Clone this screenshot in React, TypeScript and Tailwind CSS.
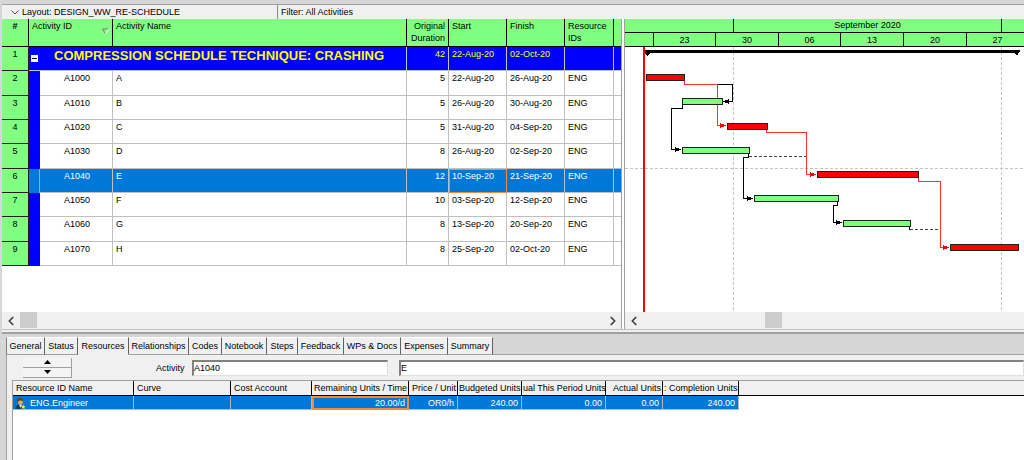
import { ChevronLeft, ChevronRight } from 'lucide-react';
import clsx from 'clsx';

interface Activity {
  id: string;
  name: string;
  duration: number;
  start: string;
  finish: string;
}

const activities: Activity[] = [
  { id: 'A1000', name: 'A', duration: 5, start: '22-Aug-20', finish: '26-Aug-20' },
  { id: 'A1010', name: 'B', duration: 5, start: '26-Aug-20', finish: '30-Aug-20' },
  { id: 'A1020', name: 'C', duration: 5, start: '31-Aug-20', finish: '04-Sep-20' },
  { id: 'A1030', name: 'D', duration: 8, start: '26-Aug-20', finish: '02-Sep-20' },
  { id: 'A1040', name: 'E', duration: 12, start: '10-Sep-20', finish: '21-Sep-20' },
  { id: 'A1050', name: 'F', duration: 10, start: '03-Sep-20', finish: '12-Sep-20' },
  { id: 'A1060', name: 'G', duration: 8, start: '13-Sep-20', finish: '20-Sep-20' },
  { id: 'A1070', name: 'H', duration: 8, start: '25-Sep-20', finish: '02-Oct-20' },
];

const selectedId = 'A1040';

const tabs = [
  { label: 'General', width: 'w-[39px]' },
  { label: 'Status', width: 'w-[33px]' },
  { label: 'Resources', width: 'w-[51px]' },
  { label: 'Relationships', width: 'w-[60px]' },
  { label: 'Codes', width: 'w-[33px]' },
  { label: 'Notebook', width: 'w-[45px]' },
  { label: 'Steps', width: 'w-[31px]' },
  { label: 'Feedback', width: 'w-[46px]' },
  { label: 'WPs & Docs', width: 'w-[57px]' },
  { label: 'Expenses', width: 'w-[47px]' },
  { label: 'Summary', width: 'w-[45px]' },
];

// x, y, width, critical
const bars: [number, number, number, boolean][] = [
  [21, 27, 38, true],
  [57, 51, 40, false],
  [102, 76, 40, true],
  [57, 100, 67, false],
  [192, 124, 101, true],
  [129, 148, 84, false],
  [218, 173, 67, false],
  [325, 197, 68, true],
];

const LayoutBar = () => (
  <div className="flex h-[14px] items-center bg-[#f0f0f0] leading-3">
    <button className="flex h-full w-[276px] items-center border-r border-[#8c8c8c] pl-[9px]">
      <svg width="8" height="5" className="mr-[3px]" fill="none" stroke="#555">
        <path d="M.5 .5 4 4 7.5 .5" />
      </svg>
      Layout: DESIGN_WW_RE-SCHEDULE
    </button>
    <span className="pl-[3px]">Filter: All Activities</span>
  </div>
);

const ActivityTable = () => {
  const head = 'border-r border-b border-black bg-[#80ff80] px-[3px] pt-[1px]';
  const cell = 'border-r border-b border-[#c0c0c0] px-[3px] pt-[1px]';
  const focused = 'border border-[#f08a3c] px-[2px]';
  const num = 'border-r border-b border-[#202020] bg-[#80ff80] pt-[1px] text-center';

  return (
    <table className="h-[247px] w-full table-fixed border-separate border-spacing-0 text-left align-top">
      <colgroup>
        <col className="w-[27px]" />
        <col className="w-[11px]" />
        <col className="w-[73px]" />
        <col />
        <col className="w-[42px]" />
        <col className="w-[58px]" />
        <col className="w-[58px]" />
        <col className="w-[49px]" />
        <col className="w-[7px]" />
      </colgroup>
      <thead>
        <tr className="h-[28px] align-top [&>th]:font-normal">
          <th className={clsx(head, 'text-center')}>
            <b>#</b>
          </th>
          <th colSpan={2} className={head}>
            <div className="flex justify-between">
              Activity ID
              <svg width="7" height="7" className="mt-[8px]" fill="none">
                <path d="M.5 1h6" stroke="#777" />
                <path d="M.5 1 3.500 6" stroke="#777" />
                <path d="M6.500 1 3.500 6" stroke="#fff" />
              </svg>
            </div>
          </th>
          <th className={head}>Activity Name</th>
          <th className={clsx(head, 'text-right')}>
            Original
            <br />
            Duration
          </th>
          <th className={head}>Start</th>
          <th className={head}>Finish</th>
          <th className={head}>
            Resource
            <br />
            IDs
          </th>
          <th className="border-b border-black bg-[#80ff80]" />
        </tr>
      </thead>
      <tbody className="align-top">
        <tr className="h-[24px] bg-[#0000ff] text-[#ffff00]">
          <td className={clsx(num, 'text-black')}>1</td>
          <td colSpan={3} className="border-r border-b border-[#c0c0c0] pl-[2px]">
            <div className="flex">
              <button
                aria-label="Collapse"
                className="mt-[8px] flex size-[7px] shrink-0 items-center justify-center bg-white"
              >
                <span className="h-px w-[5px] bg-black" />
              </button>
              <span className="pl-[16px] text-[13px] leading-[17px] font-bold whitespace-nowrap">
                COMPRESSION SCHEDULE TECHNIQUE: CRASHING
              </span>
            </div>
          </td>
          <td className={clsx(cell, 'text-right')}>42</td>
          <td className={cell}>22-Aug-20</td>
          <td className={cell}>02-Oct-20</td>
          <td className={cell} />
          <td className="border-b border-[#c0c0c0]" />
        </tr>
        {activities.map((activity, i) => {
          const selected = activity.id === selectedId;
          return (
            <tr key={activity.id} className={clsx('h-[24px]', selected ? 'bg-[#0078d7] text-white' : 'bg-white')}>
              <td className={clsx(num, 'text-black')}>{i + 2}</td>
              <td className={selected ? 'border-r border-[#80b0d8]' : 'bg-[#0000ff]'} />
              <td className="border-r border-b border-[#c0c0c0] pt-[1px] pl-[24px]">{activity.id}</td>
              <td className={cell}>{activity.name}</td>
              <td className={clsx(cell, 'text-right')}>{activity.duration}</td>
              <td className={selected ? focused : cell}>{activity.start}</td>
              <td className={cell}>{activity.finish}</td>
              <td className={cell}>ENG</td>
              <td className="border-b border-[#c0c0c0]" />
            </tr>
          );
        })}
      </tbody>
    </table>
  );
};

const Timescale = () => (
  <div className="border-b border-black bg-[#80ff80] text-center">
    <div className="flex h-[14px] border-b border-black leading-3">
      <div className="w-[109px] shrink-0 border-r border-black" />
      <div className="w-[268px] shrink-0 border-r border-black">September 2020</div>
    </div>
    <div className="flex h-[13px] overflow-hidden leading-[14px]">
      <div className="w-[29px] shrink-0 border-r border-black" />
      <div className="w-[62px] shrink-0 border-r border-black">23</div>
      <div className="w-[63px] shrink-0 border-r border-black">30</div>
      <div className="w-[62px] shrink-0 border-r border-black">06</div>
      <div className="w-[63px] shrink-0 border-r border-black">13</div>
      <div className="w-[63px] shrink-0 border-r border-black">20</div>
      <div className="w-[62px] shrink-0 border-r border-black">27</div>
    </div>
  </div>
);

const GanttChart = () => (
  <svg className="h-[265px] w-full" fill="none" shapeRendering="crispEdges">
    <g stroke="#c4c4c4" strokeDasharray="3 2">
      <path d="M108.500 0V265M376.500 0V265" />
      <path d="M0 121.500H1600" />
    </g>
    <path d="M19 0V265" stroke="#f00" strokeWidth="2" />
    <path d="M20 3H395V4L392 9L389 6H26L22 9L20 6Z" fill="#000" />
    {/* driving links */}
    <g stroke="#000">
      <path d="M92 37.500H107.500V54.500H99" />
      <path d="M57.500 58V61.500H46.500V102.500H55" />
      <path d="M123.500 107V110.500H118.500V151.500H127" />
      <path d="M212.500 155V158.500H208.500V175.500H216" />
      <path d="M284.500 180V183" />
    </g>
    <g stroke="#444" strokeDasharray="3 2">
      <path d="M124 109.500H181" />
      <path d="M285 182.500H315" />
    </g>
    <g stroke="#ff3030">
      <path d="M59.500 34V37.500H92.500V78.500H100" />
      <path d="M141.500 83V85.500H181.500V127.500H190" />
      <path d="M293.500 131V134.500H315.500V200.500H323" />
    </g>
    <g fill="#000">
      <path d="M98 54.500L104 52V57Z" />
      <path d="M56 102.500L50 100V105Z" />
      <path d="M128 151.500L122 149V154Z" />
      <path d="M217 175.500L211 173V178Z" />
    </g>
    <g fill="#f00">
      <path d="M101 78.500L95 76V81Z" />
      <path d="M191 127.500L185 125V130Z" />
      <path d="M324 200.500L318 198V203Z" />
    </g>
    {bars.map(([x, y, width, critical]) => (
      <rect
        key={y}
        x={x + 0.5}
        y={y + 0.5}
        width={width}
        height={6}
        fill={critical ? '#ff0000' : '#80ff80'}
        stroke="#202020"
      />
    ))}
  </svg>
);

const ScrollBar = ({ thumb, end }: { thumb: string; end?: boolean }) => (
  <div className="flex h-[17px] items-center bg-[#f0f0f0] text-[#404040]">
    <button aria-label="Scroll left" className="flex w-[17px] justify-center">
      <ChevronLeft size={14} strokeWidth={3} />
    </button>
    <div className="flex h-full flex-1">
      <div className={clsx('h-[16px] w-[17px] bg-[#cdcdcd]', thumb)} />
    </div>
    {end && (
      <button aria-label="Scroll right" className="flex w-[17px] justify-center">
        <ChevronRight size={14} strokeWidth={3} />
      </button>
    )}
  </div>
);

const PersonIcon = () => (
  <svg width="12" height="12" viewBox="0 0 12 13" className="shrink-0">
    <path d="M1 13C1 9 3.500 8 6 8s4 1 4.500 5Z" fill="#123f66" />
    <path d="M5 8h3l-1 4Z" fill="#fff" />
    <ellipse cx="6.500" cy="5" rx="2.800" ry="3.500" fill="#d7a66a" />
    <path d="M3 6C2 2 4 1 6.500 1S10 3 9 5C8 4 7 3.500 5 4Z" fill="#5b4422" />
    <path d="m9.500 8 .8 1.700 1.700.3-1.300 1.200.3 1.800-1.500-.9-1.500.9.3-1.800L7 10l1.700-.3Z" fill="#f5ee1c" />
  </svg>
);

const ResourceTable = () => {
  const head = 'border-r border-b border-black font-normal whitespace-nowrap';
  const cell = 'border-r border-b border-[#a8b8c8] bg-[#0078d7] px-[3px]';

  return (
    <table className="w-full table-fixed border-separate border-spacing-0 text-left">
      <colgroup>
        <col className="w-[121px]" />
        <col className="w-[97px]" />
        <col className="w-[81px]" />
        <col className="w-[97px]" />
        <col className="w-[49px]" />
        <col className="w-[64px]" />
        <col className="w-[84px]" />
        <col className="w-[57px]" />
        <col className="w-[76px]" />
        <col />
      </colgroup>
      <thead>
        <tr className="h-[15px] bg-[#f0f0f0]">
          <th className={clsx(head, 'px-[3px]')}>Resource ID Name</th>
          <th className={clsx(head, 'px-[3px]')}>Curve</th>
          <th className={clsx(head, 'px-[3px]')}>Cost Account</th>
          <th className={clsx(head, 'px-px text-right')}>Remaining Units / Time</th>
          <th className={clsx(head, 'px-px text-right')}>Price / Unit</th>
          <th className={clsx(head, 'px-px text-right')}>Budgeted Units</th>
          <th className={clsx(head, 'px-px text-right')}>ual This Period Units</th>
          <th className={clsx(head, 'px-px text-right')}>Actual Units</th>
          <th className={clsx(head, 'px-px text-right')}>: Completion Units</th>
          <th className="border-b border-black" />
        </tr>
      </thead>
      <tbody>
        <tr className="h-[14px] text-white">
          <td className={clsx(cell, 'pl-[1px]')}>
            <div className="flex items-center gap-[4px]">
              <PersonIcon />
              ENG.Engineer
            </div>
          </td>
          <td className={cell} />
          <td className={cell} />
          <td className="border-2 border-[#f08a3c] bg-[#0078d7] px-[2px] text-right leading-[10px]">20.00/d</td>
          <td className={clsx(cell, 'text-right')}>OR0/h</td>
          <td className={clsx(cell, 'text-right')}>240.00</td>
          <td className={clsx(cell, 'text-right')}>0.00</td>
          <td className={clsx(cell, 'text-right')}>0.00</td>
          <td className={clsx(cell, 'text-right')}>240.00</td>
          <td />
        </tr>
      </tbody>
    </table>
  );
};

const DetailsPanel = () => {
  const field =
    'h-[16px] border-t-2 border-l-2 border-r border-b border-t-[#808080] border-l-[#808080] border-r-[#e0e0e0] border-b-[#e0e0e0] bg-white outline-none';
  const spin = 'flex h-[10px] items-center justify-center border-r border-b border-[#a0a0a0] bg-[#f4f4f4]';

  return (
    <section className="flex flex-1 flex-col border-t-2 border-[#a0a0a0] bg-[#d6d6d6] pt-[3px] pl-[4px]">
      <div role="tablist" className="flex h-[18px]">
        {tabs.map(({ label, width }) => {
          const active = label === 'Resources';
          return (
            <button
              key={label}
              role="tab"
              aria-selected={active}
              className={clsx(
                'shrink-0 border-t border-r border-b border-t-white border-r-[#606060] bg-[#f0f0f0] text-center whitespace-nowrap first:border-l first:border-l-[#808080]',
                active ? 'border-b-[#f0f0f0]' : 'border-b-[#a0a0a0]',
                width,
              )}
            >
              {label}
            </button>
          );
        })}
        <div className="flex-1 border-b border-[#a0a0a0]" />
      </div>
      <div className="flex flex-1 flex-col border-l border-[#a0a0a0] bg-[#f0f0f0] pl-[5px]">
        <div className="flex h-[25px] items-center">
          <div className="ml-[11px] w-[49px]">
            <button aria-label="Previous activity" className={clsx(spin, 'w-full')}>
              <svg width="7" height="4">
                <path d="M3.500 0 7 4H0Z" />
              </svg>
            </button>
            <button aria-label="Next activity" className={clsx(spin, 'w-full')}>
              <svg width="7" height="4">
                <path d="M3.500 4 7 0H0Z" />
              </svg>
            </button>
          </div>
          <label htmlFor="activity-id" className="ml-[84px] w-[36px]">
            Activity
          </label>
          <input id="activity-id" defaultValue="A1040" className={clsx(field, 'w-[196px]')} />
          <input aria-label="Activity name" defaultValue="E" className={clsx(field, 'ml-[11px] min-w-0 flex-1')} />
        </div>
        <div className="flex-1 border-t border-l border-[#a0a0a0] bg-white">
          <ResourceTable />
        </div>
      </div>
    </section>
  );
};

export default function App() {
  return (
    <main className="flex min-h-screen flex-col bg-[#d6d6d6] pt-[4px] font-['Liberation_Sans',Arial,sans-serif] text-[9px] leading-3 text-black">
      <div className="ml-[2px] flex flex-1 flex-col border-t border-[#a0a0a0]">
        <LayoutBar />
        <div className="grid grid-cols-[619fr_403fr]">
          <div className="flex min-w-0 flex-col bg-white">
            <ActivityTable />
            <div className="flex-1" />
            <ScrollBar thumb="ml-px" end />
          </div>
          <div className="min-w-0 border-l-4 border-double border-[#a0a0a0] bg-white">
            <Timescale />
            <GanttChart />
            <ScrollBar thumb="ml-[123px]" />
          </div>
        </div>
        <div className="h-[3px] border-t border-[#c0c0c0] bg-[#f0f0f0]" />
        <DetailsPanel />
      </div>
    </main>
  );
}
